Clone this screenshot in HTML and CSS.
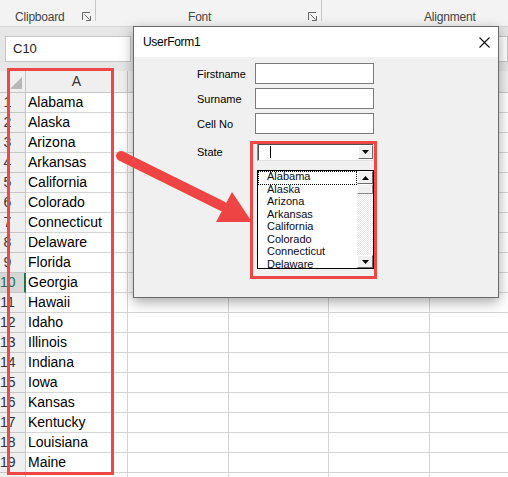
FILE: index.html
```html
<!DOCTYPE html>
<html>
<head>
<meta charset="utf-8">
<title>UserForm1</title>
<link rel="stylesheet" href="styles.css">
</head>
<body>
<div class="app">
  <div class="ribbon">
    <div class="group g-clip">
      <span class="glabel">Clipboard</span>
      <svg class="launcher" width="9" height="9" viewBox="0 0 9 9"><path d="M0.5 8V0.5H8" fill="none" stroke="#666"/><path d="M2.5 2.5L7.5 7.5M8.5 4V8.5H4" fill="none" stroke="#666"/></svg>
    </div>
    <div class="group g-font">
      <span class="glabel">Font</span>
      <svg class="launcher" width="9" height="9" viewBox="0 0 9 9"><path d="M0.5 8V0.5H8" fill="none" stroke="#666"/><path d="M2.5 2.5L7.5 7.5M8.5 4V8.5H4" fill="none" stroke="#666"/></svg>
    </div>
    <div class="group g-align">
      <span class="glabel">Alignment</span>
    </div>
  </div>

  <div class="fbar">
    <div class="namebox">C10</div>
    <div class="finput"></div>
  </div>

  <div class="sheet">
    <div class="corner"><span class="tri"></span></div><div class="ch">A</div><div class="ch">B</div><div class="ch">C</div><div class="ch">D</div><div class="ch">E</div>
    <div class="rh">1</div><div class="c">Alabama</div><div class="c"></div><div class="c"></div><div class="c"></div><div class="c"></div>
    <div class="rh">2</div><div class="c">Alaska</div><div class="c"></div><div class="c"></div><div class="c"></div><div class="c"></div>
    <div class="rh">3</div><div class="c">Arizona</div><div class="c"></div><div class="c"></div><div class="c"></div><div class="c"></div>
    <div class="rh">4</div><div class="c">Arkansas</div><div class="c"></div><div class="c"></div><div class="c"></div><div class="c"></div>
    <div class="rh">5</div><div class="c">California</div><div class="c"></div><div class="c"></div><div class="c"></div><div class="c"></div>
    <div class="rh">6</div><div class="c">Colorado</div><div class="c"></div><div class="c"></div><div class="c"></div><div class="c"></div>
    <div class="rh">7</div><div class="c">Connecticut</div><div class="c"></div><div class="c"></div><div class="c"></div><div class="c"></div>
    <div class="rh">8</div><div class="c">Delaware</div><div class="c"></div><div class="c"></div><div class="c"></div><div class="c"></div>
    <div class="rh">9</div><div class="c">Florida</div><div class="c"></div><div class="c"></div><div class="c"></div><div class="c"></div>
    <div class="rh sel">10</div><div class="c">Georgia</div><div class="c"></div><div class="c"></div><div class="c"></div><div class="c"></div>
    <div class="rh">11</div><div class="c">Hawaii</div><div class="c"></div><div class="c"></div><div class="c"></div><div class="c"></div>
    <div class="rh">12</div><div class="c">Idaho</div><div class="c"></div><div class="c"></div><div class="c"></div><div class="c"></div>
    <div class="rh">13</div><div class="c">Illinois</div><div class="c"></div><div class="c"></div><div class="c"></div><div class="c"></div>
    <div class="rh">14</div><div class="c">Indiana</div><div class="c"></div><div class="c"></div><div class="c"></div><div class="c"></div>
    <div class="rh">15</div><div class="c">Iowa</div><div class="c"></div><div class="c"></div><div class="c"></div><div class="c"></div>
    <div class="rh">16</div><div class="c">Kansas</div><div class="c"></div><div class="c"></div><div class="c"></div><div class="c"></div>
    <div class="rh">17</div><div class="c">Kentucky</div><div class="c"></div><div class="c"></div><div class="c"></div><div class="c"></div>
    <div class="rh">18</div><div class="c">Louisiana</div><div class="c"></div><div class="c"></div><div class="c"></div><div class="c"></div>
    <div class="rh">19</div><div class="c">Maine</div><div class="c"></div><div class="c"></div><div class="c"></div><div class="c"></div>
    <div class="rh"></div><div class="c"></div><div class="c"></div><div class="c"></div><div class="c"></div><div class="c"></div>
  </div>

  <div class="userform">
    <div class="titlebar">
      <span class="title">UserForm1</span>
      <svg class="close" width="11" height="11" viewBox="0 0 11 11"><path d="M0.5 0.5L10.5 10.5M10.5 0.5L0.5 10.5" stroke="#111" stroke-width="1.1"/></svg>
    </div>
    <div class="fbody">
      <div class="frow"><span class="flabel">Firstname</span><span class="tbox"></span></div>
      <div class="frow"><span class="flabel">Surname</span><span class="tbox"></span></div>
      <div class="frow"><span class="flabel">Cell No</span><span class="tbox"></span></div>
      <div class="frow state"><span class="flabel">State</span>
        <div class="combo">
          <span class="caret"></span>
          <span class="ddbtn"><svg width="7" height="4" viewBox="0 0 7 4"><path d="M0 0H7L3.5 4Z" fill="#000"/></svg></span>
          <div class="dlist">
            <div class="item focus">Alabama</div>
            <div class="item">Alaska</div>
            <div class="item">Arizona</div>
            <div class="item">Arkansas</div>
            <div class="item">California</div>
            <div class="item">Colorado</div>
            <div class="item">Connecticut</div>
            <div class="item">Delaware</div>
            <div class="sbar">
              <span class="sbtn"><svg width="7" height="4" viewBox="0 0 7 4"><path d="M0 4H7L3.5 0Z" fill="#000"/></svg></span>
              <span class="thumb"></span>
              <span class="track"></span>
              <span class="sbtn"><svg width="7" height="4" viewBox="0 0 7 4"><path d="M0 0H7L3.5 4Z" fill="#000"/></svg></span>
            </div>
          </div>
        </div>
      </div>
    </div>
  </div>

  <div class="hl hl-col"></div>
  <div class="hl hl-combo"></div>

  <svg class="arrow" width="508" height="477" viewBox="0 0 508 477">
    <line x1="121" y1="156" x2="222" y2="206" stroke="#ee4444" stroke-width="10" stroke-linecap="round"/>
    <polygon points="252,222 232,192 216,222" fill="#ee4444"/>
  </svg>
</div>
</body>
</html>
```

FILE: styles.css
```css
* { box-sizing: border-box; margin: 0; padding: 0; }
html, body { width: 508px; height: 477px; overflow: hidden; }
body { font-family: "Liberation Sans", Arial, sans-serif; background: #fff; }

.app { position: relative; width: 508px; height: 477px; overflow: hidden; background: #e6e6e6; }

/* ribbon */
.ribbon { height: 27px; background: #f3f3f3; border-bottom: 1px solid #d4d4d4; display: flex; align-items: flex-start; }
.group { display: flex; align-items: flex-start; height: 21px; font-size: 12px; color: #444; letter-spacing: -0.2px; }
.glabel { line-height: 14px; margin-top: 10px; }
.launcher { margin-left: auto; margin-top: 12px; margin-right: 4px; }
.g-clip { width: 96px; padding-left: 15px; border-right: 1px solid #c8c8c8; }
.g-font { width: 226px; padding-left: 92px; border-right: 1px solid #c8c8c8; }
.g-align { padding-left: 102px; }

/* formula bar */
.fbar { height: 44px; display: flex; align-items: flex-start; padding-top: 9px; padding-left: 5px; }
.namebox { width: 126px; height: 26px; background: #fff; border: 1px solid #c6c6c6; font-size: 13px; color: #222; line-height: 24px; padding-left: 7px; }
.finput { flex: 1; height: 26px; margin-left: 6px; background: #fff; border: 1px solid #c6c6c6; }

/* sheet */
.sheet { display: grid; grid-template-columns: 26px 102px 101px 100px 101px 101px; grid-template-rows: 22px; grid-auto-rows: 20px; background: #fff; }
.sheet > div { border-right: 1px solid #d4d4d4; border-bottom: 1px solid #d4d4d4; }
.corner { background: #efefef; position: relative; border-color: #c6c6c6 !important; }
.tri { position: absolute; right: 3px; bottom: 3px; width: 0; height: 0; border-left: 12px solid transparent; border-bottom: 12px solid #b8b8b8; }
.ch { background: #efefef; border-color: #c6c6c6 !important; font-size: 14px; color: #333; text-align: center; line-height: 21px; }
.rh { background: #efefef; border-color: #c6c6c6 !important; font-size: 14px; color: #333; line-height: 19px; text-align: center; padding-right: 10px; }
.rh.sel { background: #d6d6d6; color: #217346; border-right: 2px solid #217346 !important; }
.c { font-size: 14px; color: #000; line-height: 19px; padding-left: 2px; white-space: nowrap; }

/* user form */
.userform { position: absolute; left: 133px; top: 26px; width: 366px; height: 272px; border: 1px solid #6a6a6a; background: #f0f0f0; box-shadow: 0 4px 12px rgba(0,0,0,0.35); }
.titlebar { height: 30px; background: #fff; display: flex; align-items: center; padding-left: 9px; padding-right: 8px; }
.title { font-size: 12px; color: #000; letter-spacing: -0.3px; }
.close { margin-left: auto; }
.fbody { padding-top: 6px; padding-left: 63px; font-size: 11px; color: #000; }
.frow { display: flex; align-items: center; height: 21px; margin-bottom: 4px; }
.flabel { width: 58px; }
.tbox { width: 119px; height: 21px; background: #fff; border: 1px solid #7a7a7a; }
.frow.state { margin-top: 9px; height: 18px; }

.combo { position: relative; margin-left: 2px; width: 117px; height: 18px; background: #fff; border: 1px solid; border-color: #8a8a8a #e0e0e0 #e0e0e0 #8a8a8a; box-shadow: inset 1px 1px 0 #505050; }
.caret { position: absolute; left: 12px; top: 2px; width: 1px; height: 12px; background: #000; }
.ddbtn { position: absolute; right: 0; top: 1px; width: 15px; height: 14px; background: #f0f0f0; border: 1px solid; border-color: #fff #6a6a6a #6a6a6a #fff; display: flex; align-items: center; justify-content: center; }

.dlist { position: absolute; left: -1px; top: 26px; width: 117px; height: 99px; background: #fff; border: 1px solid #000; padding-right: 16px; overflow: hidden; }
.item { height: 12.5px; line-height: 10px; padding-left: 9px; font-size: 11px; color: #0a0a20; white-space: nowrap; position: relative; }
.item.focus::after { content: ""; position: absolute; left: 0; right: 0; top: 0; height: 12px; border: 1px dotted #000; }
.sbar { position: absolute; right: 0; top: 0; bottom: 0; width: 16px; display: flex; flex-direction: column; background: #f4f4f4; }
.sbtn { height: 13px; background: #f0f0f0; border: 1px solid; border-color: #fff #6a6a6a #6a6a6a #fff; display: flex; align-items: center; justify-content: center; }
.thumb { height: 10px; background: #f0f0f0; border: 1px solid; border-color: #fff #8a8a8a #8a8a8a #fff; }
.track { flex: 1; background: repeating-conic-gradient(#ffffff 0 25%, #e6e6e6 0 50%) 0 0 / 2px 2px; }

/* annotations */
.hl { position: absolute; border: 3px solid #ef4646; }
.hl-col { left: 7px; top: 68px; width: 107px; height: 407px; }
.hl-combo { left: 250px; top: 141px; width: 127px; height: 138px; }
.arrow { position: absolute; left: 0; top: 0; pointer-events: none; }
```
